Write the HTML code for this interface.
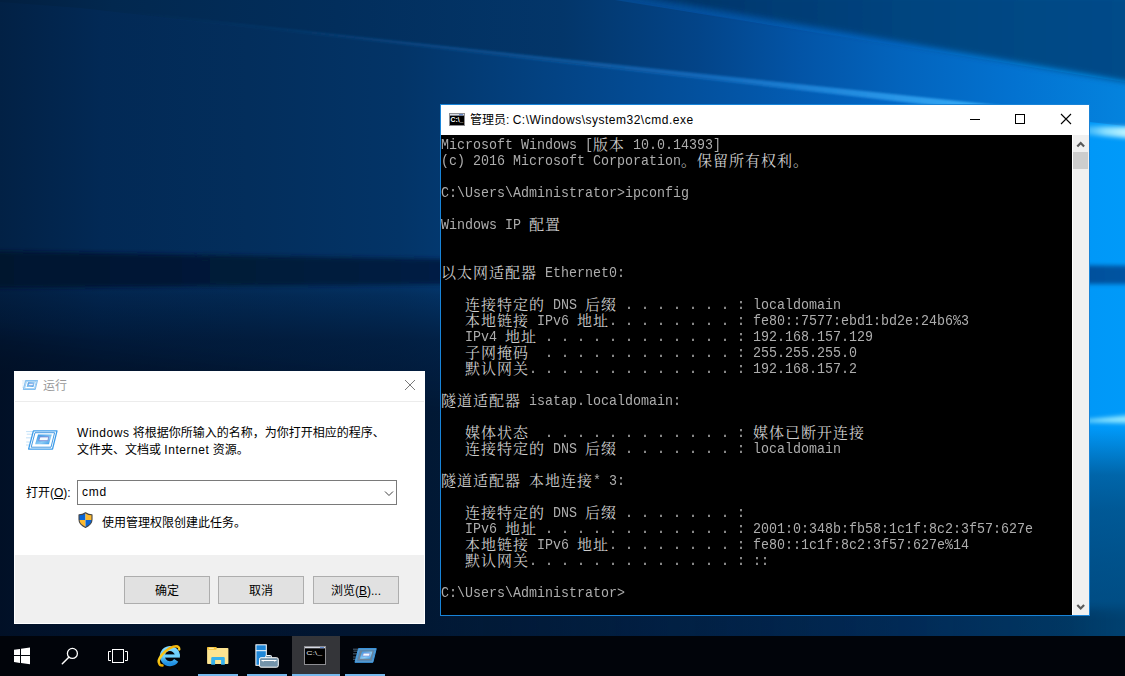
<!DOCTYPE html>
<html lang="zh-CN">
<head>
<meta charset="utf-8">
<title>Desktop</title>
<style>
*{box-sizing:border-box;margin:0;padding:0}
html,body{width:1125px;height:676px;overflow:hidden;background:#032d5c}
body{position:relative;font-family:"Liberation Sans","Noto Sans CJK SC",sans-serif;font-size:12px;color:#000}
#wall{position:absolute;left:0;top:0;width:1125px;height:676px;overflow:hidden;background:#033567}
#wall svg{position:absolute;left:0;top:0}
svg{display:block}
/* taskbar */
#taskbar{position:absolute;left:0;top:636px;width:1125px;height:40px;background:#01040a}
.tb{position:absolute;top:0;height:40px}
.ul{position:absolute;top:38px;height:2px;background:#76b9ed}
/* cmd window */
#cmd{position:absolute;left:440px;top:104px;width:650px;height:512px;border:1px solid #1883d7;background:#000}
#cmd .title{position:absolute;left:0;top:0;width:648px;height:30px;background:#fff}
#cmd .title .txt{position:absolute;left:29px;top:0;line-height:30px;font-size:12px;white-space:nowrap}
#cmd .title .txt i{font-style:normal;letter-spacing:.5px}
#cmd .body{position:absolute;left:0;top:30px;width:631px;height:480px;background:#000;overflow:hidden}
#cmd .sb{position:absolute;left:631px;top:30px;width:17px;height:480px;background:#f0f0f0;border-left:1px solid #fff}
#cmd .sb .thumb{position:absolute;left:0;top:17px;width:15px;height:17px;background:#cdcdcd}
.ln{position:absolute;left:0;height:16px;width:640px}
.ln span{position:absolute;white-space:pre;line-height:16px;height:16px;color:#c0c0c0}
.ln .l{top:2.7px;font-family:"Liberation Mono",monospace;font-size:15px;transform:scaleX(.88889);transform-origin:0 0;color:#adadad}
.ln .c{top:1px;font-family:"Noto Serif CJK SC",serif;font-size:15px;letter-spacing:1px;color:#cdcdcd}
/* run dialog */
#run{position:absolute;left:14px;top:371px;width:411px;height:253px;background:#fff}
#run .title{position:absolute;left:0;top:0;width:411px;height:30px}
#run .title .txt{position:absolute;left:29px;top:0;line-height:31px;color:#999;white-space:nowrap}
#run .sep{position:absolute;left:1px;top:30px;width:409px;height:1px;background:#ececec}
#run .desc{position:absolute;left:63px;top:54px;line-height:17px;white-space:nowrap}
#run i{font-style:normal;letter-spacing:.55px}
#run .lbl{position:absolute;left:12px;top:110px;line-height:24px;white-space:nowrap}
#run .inp{position:absolute;left:63px;top:109px;width:320px;height:25px;border:1px solid #7a7a7a;background:#fff}
#run .inp .v{position:absolute;left:4px;top:0;line-height:22px;letter-spacing:.7px}
#run .adm{position:absolute;left:88px;top:143.8px;line-height:17px;white-space:nowrap}
#run .foot{position:absolute;left:1px;top:184px;width:409px;height:68px;background:#f0f0f0}
.btn{position:absolute;top:205px;width:86px;height:28px;border:1px solid #adadad;background:#e1e1e1;text-align:center;line-height:28px;white-space:nowrap}
u{text-decoration:underline}
</style>
</head>
<body>
<div id="wall">
<svg width="1125" height="676" viewBox="0 0 1125 676">
<defs>
<linearGradient id="gC" gradientUnits="userSpaceOnUse" x1="0" y1="0" x2="1125" y2="0">
 <stop offset="0" stop-color="#022145"/>
 <stop offset=".09" stop-color="#022955"/>
 <stop offset=".22" stop-color="#032e5c"/>
 <stop offset=".355" stop-color="#033467"/>
 <stop offset=".445" stop-color="#033e7a"/>
 <stop offset=".533" stop-color="#03478c"/>
 <stop offset=".667" stop-color="#0356a8"/>
 <stop offset=".8" stop-color="#0268c8"/>
 <stop offset=".9" stop-color="#0282e2"/>
 <stop offset=".97" stop-color="#0098f8"/>
 <stop offset="1" stop-color="#009af9"/>
</linearGradient>
<linearGradient id="gB" gradientUnits="userSpaceOnUse" x1="0" y1="0" x2="1125" y2="0">
 <stop offset="0" stop-color="#021f40"/>
 <stop offset=".1" stop-color="#02284f"/>
 <stop offset=".3" stop-color="#022e5c"/>
 <stop offset=".5" stop-color="#03366a"/>
 <stop offset=".62" stop-color="#034488"/>
 <stop offset=".71" stop-color="#0354a6"/>
 <stop offset=".8" stop-color="#0364bd"/>
 <stop offset=".9" stop-color="#0372d0"/>
 <stop offset="1" stop-color="#0483de"/>
</linearGradient>
<linearGradient id="gA" gradientUnits="userSpaceOnUse" x1="625" y1="0" x2="1125" y2="0">
 <stop offset="0" stop-color="#022f5e"/>
 <stop offset=".25" stop-color="#023a72"/>
 <stop offset=".55" stop-color="#02447f"/>
 <stop offset="1" stop-color="#024b89"/>
</linearGradient>
<linearGradient id="gR1" gradientUnits="userSpaceOnUse" x1="80" y1="0" x2="1125" y2="0">
 <stop offset="0" stop-color="#1a6fc4" stop-opacity="0"/>
 <stop offset=".3" stop-color="#1a6fc4" stop-opacity=".35"/>
 <stop offset=".6" stop-color="#1f86e2" stop-opacity=".55"/>
 <stop offset=".9" stop-color="#3fb8ff" stop-opacity=".95"/>
 <stop offset="1" stop-color="#b5efff" stop-opacity="1"/>
</linearGradient>
<linearGradient id="gBand" gradientUnits="userSpaceOnUse" x1="0" y1="0" x2="1125" y2="0">
 <stop offset="0" stop-color="#01162f"/>
 <stop offset=".3" stop-color="#021c3d"/>
 <stop offset=".45" stop-color="#022149"/>
 <stop offset=".7" stop-color="#023a78"/>
 <stop offset="1" stop-color="#0353a1"/>
</linearGradient>
<!-- darkening of lower part, boundary tilted -->
<linearGradient id="gDark" gradientUnits="userSpaceOnUse" x1="0" y1="284" x2="0" y2="376">
 <stop offset="0" stop-color="#000a1e" stop-opacity="0"/>
 <stop offset=".12" stop-color="#000a1e" stop-opacity="0.16"/>
 <stop offset=".6" stop-color="#000a1e" stop-opacity="0.5"/>
 <stop offset="1" stop-color="#000a1e" stop-opacity="0.6"/>
</linearGradient>
<linearGradient id="gDarkR" gradientUnits="userSpaceOnUse" x1="0" y1="428" x2="0" y2="620">
 <stop offset="0" stop-color="#000a1e" stop-opacity="0"/>
 <stop offset=".245" stop-color="#000a1e" stop-opacity="0.36"/>
 <stop offset=".427" stop-color="#000a1e" stop-opacity="0.45"/>
 <stop offset=".69" stop-color="#000a1e" stop-opacity="0.5"/>
 <stop offset=".9" stop-color="#000a1e" stop-opacity="0.53"/>
 <stop offset="1" stop-color="#000a1e" stop-opacity="0.6"/>
</linearGradient>
<filter id="b2" x="-5%" y="-50%" width="110%" height="200%"><feGaussianBlur stdDeviation="1.2"/></filter>
<filter id="b4" x="-5%" y="-50%" width="110%" height="200%"><feGaussianBlur stdDeviation="3"/></filter>
<linearGradient id="gDark2" gradientUnits="userSpaceOnUse" x1="0" y1="0" x2="1125" y2="0">
 <stop offset="0" stop-color="#000814" stop-opacity=".15"/>
 <stop offset=".45" stop-color="#000814" stop-opacity=".15"/>
 <stop offset=".85" stop-color="#000814" stop-opacity="0"/>
</linearGradient>
<filter id="b12" x="-5%" y="-20%" width="110%" height="140%"><feGaussianBlur stdDeviation="12"/></filter>
<linearGradient id="gBot" gradientUnits="userSpaceOnUse" x1="0" y1="0" x2="1125" y2="0">
 <stop offset=".4" stop-color="#000a1e" stop-opacity="0"/>
 <stop offset=".7" stop-color="#000a1e" stop-opacity=".1"/>
 <stop offset=".95" stop-color="#000a1e" stop-opacity=".14"/>
 <stop offset="1" stop-color="#000a1e" stop-opacity=".05"/>
</linearGradient>
<filter id="b2b" x="-5%" y="-50%" width="110%" height="200%"><feGaussianBlur stdDeviation="2"/></filter>
<linearGradient id="gR1b" gradientUnits="userSpaceOnUse" x1="1085" y1="0" x2="1125" y2="0">
 <stop offset="0" stop-color="#40b8fa" stop-opacity=".75"/>
 <stop offset=".5" stop-color="#8fe2ff" stop-opacity=".95"/>
 <stop offset="1" stop-color="#b8f2ff" stop-opacity="1"/>
</linearGradient>
</defs>
<rect x="0" y="0" width="1125" height="676" fill="url(#gC)"/>
<!-- region B -->
<polygon points="0,0 615,0 1125,82 1125,126 80,8 0,2" fill="url(#gB)"/>
<!-- region A -->
<polygon points="625,-6 1135,-6 1135,83.500" fill="url(#gA)" filter="url(#b4)"/>
<!-- dark horizontal band -->
<polygon points="-20,251 440,259 1145,266 1145,284 440,284.500 -20,288" fill="url(#gBand)" filter="url(#b2b)"/>
<!-- ray 1 -->
<polygon points="80,7 1000,105.600 1000,113 600,67" fill="url(#gR1)" filter="url(#b2)"/>
<polygon points="1080,126 1150,127.500 1150,140 1080,134" fill="url(#gR1b)" filter="url(#b2b)"/>
<!-- ray 2 (right) -->
<polygon points="1070,421.500 1160,412 1160,424" fill="#8fe6ff" filter="url(#b2b)"/>
<!-- lower darkening -->
<rect x="0" y="0" width="560" height="676" fill="url(#gDark)"/>
<rect x="560" y="0" width="565" height="676" fill="url(#gDarkR)"/>
<polygon points="-40,335 1165,488 1165,720 -40,720" fill="url(#gDark2)" filter="url(#b12)"/>
<polygon points="400,612 1165,608 1165,720 400,720" fill="url(#gBot)" filter="url(#b4)"/>
</svg>

</div>

<div id="cmd">
 <div class="title">
  <svg style="position:absolute;left:8px;top:8px" width="16" height="13" viewBox="0 0 16 13">
<rect x=".5" y=".5" width="15" height="12" fill="#000" stroke="#8e8e92" stroke-width="1"/>
<rect x="1" y="1" width="14" height="1.6" fill="#d6dae4"/>
<rect x="10" y="1.2" width="4" height="1" fill="#4a78c8"/>
<text x="1.6" y="8.8" font-family="Liberation Sans, sans-serif" font-weight="bold" font-size="6.5" fill="#fff" textLength="12.8" lengthAdjust="spacingAndGlyphs">C:\_</text>
</svg>
  <span class="txt">管理员: <i>C:\Windows\system32\cmd.exe</i></span>
  <svg style="position:absolute;left:500px;top:0" width="148" height="30" viewBox="941 105 148 30">
<g fill="none" stroke="#000" stroke-width="1"><path d="M970 119.500H980"/><rect x="1015.500" y="114.500" width="9" height="9"/><path d="M1061 114L1071 124M1071 114L1061 124" stroke-width="1.100"/></g>
</svg>
 </div>
 <div class="body">
<div class="ln" style="top:0px"><span class="l" style="left:0px">Microsoft Windows [</span><span class="c" style="left:152px">版本</span><span class="l" style="left:192px">10.0.14393]</span></div>
<div class="ln" style="top:16px"><span class="l" style="left:0px">(c) 2016 Microsoft Corporation</span><span class="c" style="left:240px">。保留所有权利。</span></div>
<div class="ln" style="top:48px"><span class="l" style="left:0px">C:\Users\Administrator&gt;ipconfig</span></div>
<div class="ln" style="top:80px"><span class="l" style="left:0px">Windows IP</span><span class="c" style="left:88px">配置</span></div>
<div class="ln" style="top:128px"><span class="c" style="left:0px">以太网适配器</span><span class="l" style="left:104px">Ethernet0:</span></div>
<div class="ln" style="top:160px"><span class="c" style="left:24px">连接特定的</span><span class="l" style="left:112px">DNS</span><span class="c" style="left:144px">后缀</span><span class="l" style="left:184px">. . . . . . . : localdomain</span></div>
<div class="ln" style="top:176px"><span class="c" style="left:24px">本地链接</span><span class="l" style="left:96px">IPv6</span><span class="c" style="left:136px">地址</span><span class="l" style="left:168px">. . . . . . . . : fe80::7577:ebd1:bd2e:24b6%3</span></div>
<div class="ln" style="top:192px"><span class="l" style="left:24px">IPv4</span><span class="c" style="left:64px">地址</span><span class="l" style="left:104px">. . . . . . . . . . . . : 192.168.157.129</span></div>
<div class="ln" style="top:208px"><span class="c" style="left:24px">子网掩码</span><span class="l" style="left:104px">. . . . . . . . . . . . : 255.255.255.0</span></div>
<div class="ln" style="top:224px"><span class="c" style="left:24px">默认网关</span><span class="l" style="left:88px">. . . . . . . . . . . . . : 192.168.157.2</span></div>
<div class="ln" style="top:256px"><span class="c" style="left:0px">隧道适配器</span><span class="l" style="left:88px">isatap.localdomain:</span></div>
<div class="ln" style="top:288px"><span class="c" style="left:24px">媒体状态</span><span class="l" style="left:104px">. . . . . . . . . . . . :</span><span class="c" style="left:312px">媒体已断开连接</span></div>
<div class="ln" style="top:304px"><span class="c" style="left:24px">连接特定的</span><span class="l" style="left:112px">DNS</span><span class="c" style="left:144px">后缀</span><span class="l" style="left:184px">. . . . . . . : localdomain</span></div>
<div class="ln" style="top:336px"><span class="c" style="left:0px">隧道适配器</span><span class="c" style="left:88px">本地连接</span><span class="l" style="left:152px">* 3:</span></div>
<div class="ln" style="top:368px"><span class="c" style="left:24px">连接特定的</span><span class="l" style="left:112px">DNS</span><span class="c" style="left:144px">后缀</span><span class="l" style="left:184px">. . . . . . . :</span></div>
<div class="ln" style="top:384px"><span class="l" style="left:24px">IPv6</span><span class="c" style="left:64px">地址</span><span class="l" style="left:104px">. . . . . . . . . . . . : 2001:0:348b:fb58:1c1f:8c2:3f57:627e</span></div>
<div class="ln" style="top:400px"><span class="c" style="left:24px">本地链接</span><span class="l" style="left:96px">IPv6</span><span class="c" style="left:136px">地址</span><span class="l" style="left:168px">. . . . . . . . : fe80::1c1f:8c2:3f57:627e%14</span></div>
<div class="ln" style="top:416px"><span class="c" style="left:24px">默认网关</span><span class="l" style="left:88px">. . . . . . . . . . . . . : ::</span></div>
<div class="ln" style="top:448px"><span class="l" style="left:0px">C:\Users\Administrator&gt;</span></div>
 </div>
 <div class="sb"><div class="thumb"></div><svg style="position:absolute;left:0;top:0" width="16" height="480" viewBox="1073 135 16 480">
<g fill="none" stroke="#5a5a5a" stroke-width="2.200"><path d="M1077.300 146.500L1080.700 143L1084.100 146.500"/><path d="M1077.300 605L1080.700 608.500L1084.100 605"/></g>
</svg></div>
</div>

<div id="run">
 <div class="title"><svg style="position:absolute;left:8px;top:8.5px" width="16.00" height="10.00" viewBox="0 0 32 20">
<defs><linearGradient id="rga" x1="0" y1="0" x2="1" y2="1"><stop offset="0" stop-color="#2a8de0"/><stop offset=".6" stop-color="#8ccdf7"/><stop offset="1" stop-color="#2f92e2"/></linearGradient></defs>
<g stroke="#9fd0f5" stroke-width=".8" stroke-linecap="round"><path d="M0.5 1.6H7M1.2 4.2H6.3M0.4 7.8H5.4M0.6 12H4.4M0.2 15H3.6" opacity=".8"/></g>
<polygon points="7.4,0.8 31,0.8 26.5,19.1 2.6,19.1" fill="#fff" stroke="#3c9cea" stroke-width="1.3" stroke-linejoin="round"/>
<polygon points="9,2.7 28.6,2.7 25,17.2 5.2,17.2" fill="#fff" stroke="#2f8fe0" stroke-width=".9" stroke-linejoin="round"/>
<polygon points="12,4.6 25.9,4.6 22.9,14.2 9.1,14.2" fill="url(#rga)"/>
<polygon points="13.9,6.9 22.7,6.9 21.9,10.7 12.8,10.7" fill="#f4fbff" stroke="#6f7fd0" stroke-width=".8" stroke-linejoin="round"/>
</svg><span class="txt">运行</span><svg style="position:absolute;left:385px;top:4px" width="24" height="24" viewBox="399 375 24 24">
<path d="M405 380L415 390M415 380L405 390" stroke="#7a7a7a" stroke-width="1" fill="none"/></svg></div>
 <div class="sep"></div>
 <svg style="position:absolute;left:12px;top:58.5px" width="32.00" height="20.00" viewBox="0 0 32 20">
<defs><linearGradient id="rgb" x1="0" y1="0" x2="1" y2="1"><stop offset="0" stop-color="#2a8de0"/><stop offset=".6" stop-color="#8ccdf7"/><stop offset="1" stop-color="#2f92e2"/></linearGradient></defs>
<g stroke="#9fd0f5" stroke-width=".8" stroke-linecap="round"><path d="M0.5 1.6H7M1.2 4.2H6.3M0.4 7.8H5.4M0.6 12H4.4M0.2 15H3.6" opacity=".8"/></g>
<polygon points="7.4,0.8 31,0.8 26.5,19.1 2.6,19.1" fill="#fff" stroke="#3c9cea" stroke-width="1.3" stroke-linejoin="round"/>
<polygon points="9,2.7 28.6,2.7 25,17.2 5.2,17.2" fill="#fff" stroke="#2f8fe0" stroke-width=".9" stroke-linejoin="round"/>
<polygon points="12,4.6 25.9,4.6 22.9,14.2 9.1,14.2" fill="url(#rgb)"/>
<polygon points="13.9,6.9 22.7,6.9 21.9,10.7 12.8,10.7" fill="#f4fbff" stroke="#6f7fd0" stroke-width=".8" stroke-linejoin="round"/>
</svg>
 <div class="desc"><i>Windows</i> 将根据你所输入的名称，为你打开相应的程序、<br>文件夹、文档或 <i>Internet</i> 资源。</div>
 <div class="lbl">打开(<u>O</u>):</div>
 <div class="inp"><span class="v">cmd</span><svg style="position:absolute;left:303px;top:6px" width="14" height="12" viewBox="380 486 14 12">
<path d="M384 490.500L388 494.500L392 490.500" stroke="#404040" stroke-width="1" fill="none"/></svg></div>
 <svg style="position:absolute;left:63.5px;top:140.5px" width="15" height="16" viewBox="0 0 15 16">
<defs><clipPath id="shc"><path d="M7.5 0.7C5.6 2.1 3.4 2.8 1 2.8V7.6C1 11.2 3.9 13.9 7.5 15.4C11.100 13.9 14 11.2 14 7.600V2.8C11.600 2.8 9.400 2.100 7.500 0.700Z"/></clipPath></defs>
<g clip-path="url(#shc)"><rect x="0" y="0" width="7.5" height="8" fill="#0a64d4"/><rect x="7.5" y="0" width="7.5" height="8" fill="#fdb92e"/><rect x="0" y="8" width="7.5" height="8" fill="#fdb92e"/><rect x="7.5" y="8" width="7.5" height="8" fill="#0a64d4"/></g>
<path d="M7.5 0.7C5.6 2.1 3.4 2.8 1 2.8V7.6C1 11.2 3.9 13.9 7.5 15.4C11.100 13.9 14 11.2 14 7.600V2.8C11.600 2.8 9.400 2.100 7.500 0.700Z" fill="none" stroke="#454545" stroke-width="1.1" stroke-linejoin="round"/>
</svg>
 <div class="adm">使用管理权限创建此任务。</div>
 <div class="foot"></div>
 <div class="btn" style="left:110px">确定</div>
 <div class="btn" style="left:204px">取消</div>
 <div class="btn" style="left:299px">浏览(<u>B</u>)...</div>
</div>

<div id="taskbar">
 <div class="tb" style="left:292px;width:48px;background:#343539"></div>
 <div class="ul" style="left:198px;width:40px"></div>
 <div class="ul" style="left:247px;width:40px"></div>
 <div class="ul" style="left:292px;width:48px"></div>
 <div class="ul" style="left:345px;width:40px"></div>
 <svg style="position:absolute;left:0;top:0" width="140" height="40" viewBox="0 636 140 40">
<g fill="#fff"><polygon points="14,649.7 20,648.9 20,655 14,655"/><polygon points="21,648.7 30,647.6 30,655 21,655"/><polygon points="14,656 20,656 20,662.9 14,662.1"/><polygon points="21,656 30,656 30,664.2 21,663"/></g>
<g fill="none" stroke="#fff"><circle cx="72.4" cy="653.4" r="5" stroke-width="1.3"/><path d="M68.8 657.2L62.3 663.7" stroke-width="1.5" stroke-linecap="round"/>
<rect x="112.500" y="649.5" width="11" height="13" stroke-width="1"/><path d="M111 651.500H108.500V660.500H111M125 651.500H127.500V660.500H125" stroke-width="1"/></g>
</svg>
<svg style="position:absolute;left:154px;top:4px" width="32" height="32" viewBox="154.500 640.400 32 32">
<defs><linearGradient id="ieg" x1="0" y1="0" x2="0" y2="1"><stop offset="0" stop-color="#7fd8ff"/><stop offset=".5" stop-color="#63c8f8"/><stop offset="1" stop-color="#1f8fe2"/></linearGradient>
<linearGradient id="ieo" x1="0" y1="1" x2="1" y2="0"><stop offset="0" stop-color="#e8a800"/><stop offset=".5" stop-color="#ffd21f"/><stop offset="1" stop-color="#f0a800"/></linearGradient></defs>
<path d="M178 656.300A7.600 7.600 0 1 0 176.700 660.800" fill="none" stroke="url(#ieg)" stroke-width="5"/>
<path d="M163.500 656.400H180.400" stroke="#6fd0fb" stroke-width="3.200" fill="none"/>
<g transform="rotate(-40 169.400 655.700)"><path d="M158 659.400A12.600 5.300 0 0 1 156.800 655.700A12.600 5.300 0 0 1 182 655.700A12.600 5.300 0 0 1 181.100 657.900" fill="none" stroke="url(#ieo)" stroke-width="2.400" stroke-linecap="round"/></g>
</svg>
<svg style="position:absolute;left:200px;top:6px" width="36" height="30" viewBox="200 642 36 30">
<path d="M207.100 648.200a1.300 1.300 0 0 1 1.300 -1.300h7.300l1.600 1.500h-10.200z" fill="#f3bd2f"/>
<rect x="207.100" y="648" width="21.300" height="16" rx=".8" fill="#fce491"/>
<rect x="207.100" y="647" width="9.600" height="2.800" rx="1" fill="#f5c338"/>
<rect x="208.800" y="647.800" width="5" height="1" fill="#fff3c0"/>
<path d="M211.200 664.800V658.200a1.200 1.200 0 0 1 1.200 -1.200h11.200a1.200 1.200 0 0 1 1.200 1.200V664.800H221.100V660.100H215.100V664.800Z" fill="#35b2ee"/>
</svg>
<svg style="position:absolute;left:250px;top:4px" width="34" height="32" viewBox="250 640 34 32">
<rect x="255.900" y="644.800" width="10.400" height="20.500" fill="#1f87d8" stroke="#fff" stroke-width="1"/>
<path d="M255.900 650.700H266.300" stroke="#fff" stroke-width="1"/>
<path d="M265.700 657.600V656.400a.9 .9 0 0 1 .9 -.9h4a.9 .9 0 0 1 .9 .9V657.600" fill="#7393aa" stroke="#fff" stroke-width="1"/>
<rect x="259.500" y="657.700" width="18.800" height="9.500" rx="1.600" fill="#7393aa" stroke="#fff" stroke-width="1"/>
<path d="M261.500 660.500H276.500M263.200 660.500V661.600M274.700 660.500V661.600" stroke="#fff" stroke-width="1" fill="none"/>
</svg>
 <svg style="position:absolute;left:304px;top:10px" width="22" height="19" viewBox="0 0 22 19">
<rect x=".5" y=".5" width="21" height="18" fill="#000" stroke="#8e8e92" stroke-width="1"/>
<rect x="1" y="1" width="20" height="1.3" fill="#d6dae4"/>
<rect x="16" y="1.2" width="4" height="1" fill="#4a78c8"/>
<text x="2.2" y="8.9" font-family="Liberation Sans, sans-serif" font-weight="normal" font-size="6" fill="#e4e4e4" textLength="15.8" lengthAdjust="spacingAndGlyphs">C:\_</text>
</svg>
 <svg style="position:absolute;left:352.5px;top:11.5px" width="24.00" height="15.00" viewBox="0 0 32 20">
<defs><linearGradient id="rgc" x1="0" y1="0" x2="1" y2="1"><stop offset="0" stop-color="#2a8de0"/><stop offset=".6" stop-color="#8ccdf7"/><stop offset="1" stop-color="#2f92e2"/></linearGradient></defs>
<g stroke="#9fd0f5" stroke-width=".8" stroke-linecap="round"><path d="M0.5 1.6H7M1.2 4.2H6.3M0.4 7.8H5.4M0.6 12H4.4M0.2 15H3.6" opacity=".8"/></g>
<polygon points="7.4,0.8 31,0.8 26.5,19.1 2.6,19.1" fill="rgba(150,210,250,.75)" stroke="#3c9cea" stroke-width="1.3" stroke-linejoin="round"/>
<polygon points="9,2.7 28.6,2.7 25,17.2 5.2,17.2" fill="rgba(110,128,145,.9)" stroke="#2f8fe0" stroke-width=".9" stroke-linejoin="round"/>
<polygon points="12,4.6 25.9,4.6 22.9,14.2 9.1,14.2" fill="url(#rgc)"/>
<polygon points="13.9,6.9 22.7,6.9 21.9,10.7 12.8,10.7" fill="#f4fbff" stroke="#6f7fd0" stroke-width=".8" stroke-linejoin="round"/>
</svg>
</div>
</body>
</html>
